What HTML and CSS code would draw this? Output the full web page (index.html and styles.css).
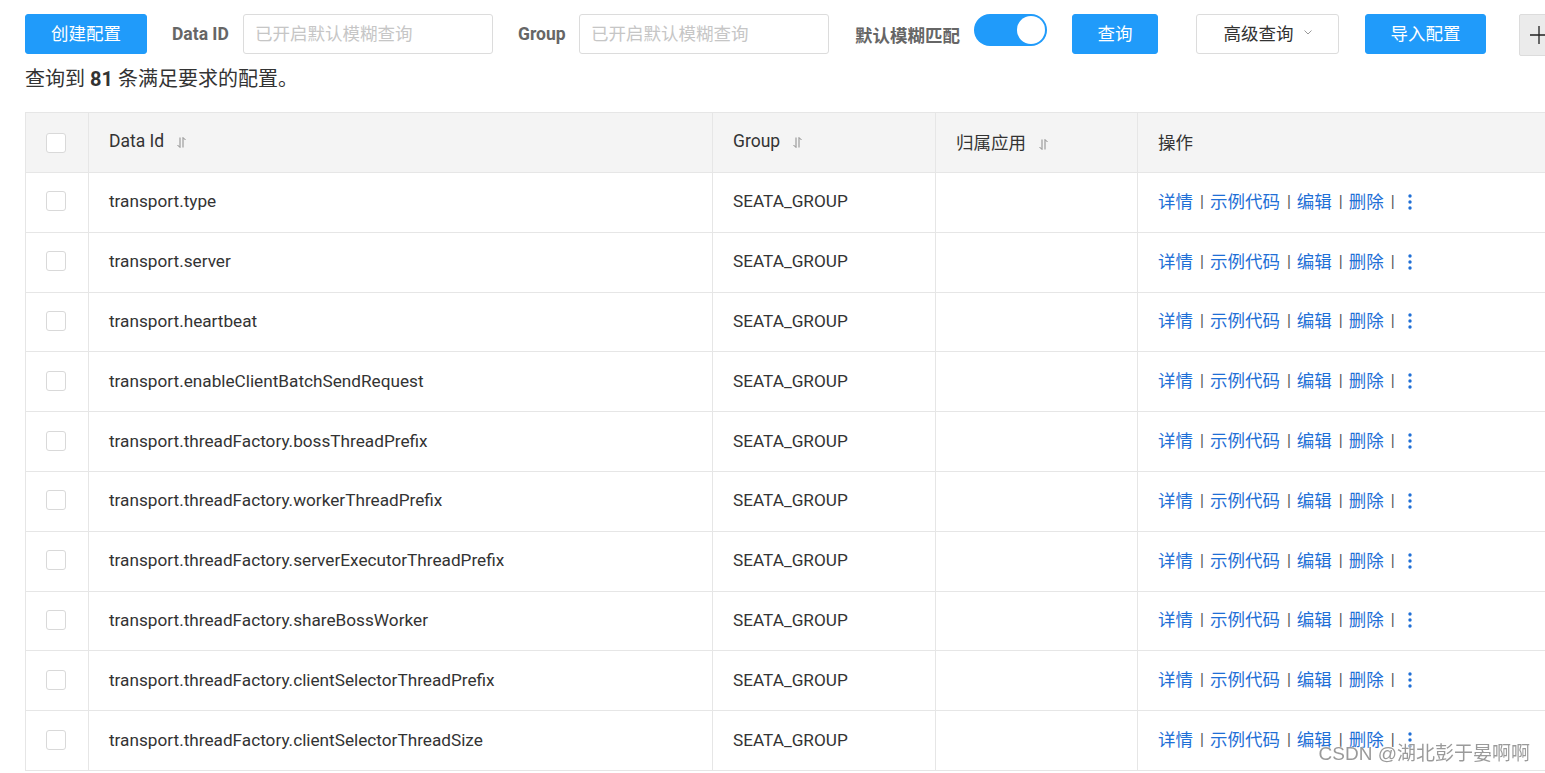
FILE: index.html
```html
<!DOCTYPE html>
<html lang="zh-CN">
<head>
<meta charset="utf-8">
<title>配置列表</title>
<link rel="stylesheet" href="styles.css">
</head>
<body>
<div class="page">
  <div class="toolbar">
    <button class="btn btn-primary btn-create">创建配置</button>
    <span class="label label-dataid">Data ID</span>
    <input class="input input-dataid" placeholder="已开启默认模糊查询">
    <span class="label label-group">Group</span>
    <input class="input input-group" placeholder="已开启默认模糊查询">
    <span class="label label-fuzzy">默认模糊匹配</span>
    <span class="switch"><span class="knob"></span></span>
    <button class="btn btn-primary btn-query">查询</button>
    <button class="btn btn-normal btn-adv">高级查询<svg class="chev" width="8" height="5" viewBox="0 0 8 5"><path d="M0.5 0.5L4 4L7.5 0.5" fill="none" stroke="#999" stroke-width="1"/></svg></button>
    <button class="btn btn-primary btn-import">导入配置</button>
    <button class="btn btn-plus"><svg width="20" height="20" viewBox="0 0 20 20"><path d="M10 1V19M1 10H19" stroke="#222" stroke-width="1.3"/></svg></button>
  </div>
  <div class="summary">查询到 <b>81</b> 条满足要求的配置。</div>
  <table class="table">
    <colgroup>
      <col class="c-check"><col class="c-id"><col class="c-group"><col class="c-app"><col class="c-op">
    </colgroup>
    <thead>
      <tr>
        <th class="cell-check"><span class="checkbox"></span></th>
        <th>Data Id<svg class="sort" width="9" height="11" viewBox="0 0 9 11"><path d="M3 0.5V10.5M3 10.5L0.5 8M6 10.5V0.5M6 0.5L8.5 3" fill="none" stroke="#8a8a8a" stroke-width="1"/></svg></th>
        <th>Group<svg class="sort" width="9" height="11" viewBox="0 0 9 11"><path d="M3 0.5V10.5M3 10.5L0.5 8M6 10.5V0.5M6 0.5L8.5 3" fill="none" stroke="#8a8a8a" stroke-width="1"/></svg></th>
        <th>归属应用<svg class="sort" width="9" height="11" viewBox="0 0 9 11"><path d="M3 0.5V10.5M3 10.5L0.5 8M6 10.5V0.5M6 0.5L8.5 3" fill="none" stroke="#8a8a8a" stroke-width="1"/></svg></th>
        <th>操作</th>
      </tr>
    </thead>
    <tbody>
      <tr><td class="cell-check"><span class="checkbox"></span></td><td>transport.type</td><td>SEATA_GROUP</td><td></td><td class="ops"><a>详情</a><span class="sep">|</span><a>示例代码</a><span class="sep">|</span><a>编辑</a><span class="sep">|</span><a>删除</a><span class="sep">|</span><svg class="more" width="4" height="16" viewBox="0 0 4 16"><circle cx="2" cy="2" r="1.7"/><circle cx="2" cy="8" r="1.7"/><circle cx="2" cy="14" r="1.7"/></svg></td></tr>
      <tr><td class="cell-check"><span class="checkbox"></span></td><td>transport.server</td><td>SEATA_GROUP</td><td></td><td class="ops"><a>详情</a><span class="sep">|</span><a>示例代码</a><span class="sep">|</span><a>编辑</a><span class="sep">|</span><a>删除</a><span class="sep">|</span><svg class="more" width="4" height="16" viewBox="0 0 4 16"><circle cx="2" cy="2" r="1.7"/><circle cx="2" cy="8" r="1.7"/><circle cx="2" cy="14" r="1.7"/></svg></td></tr>
      <tr><td class="cell-check"><span class="checkbox"></span></td><td>transport.heartbeat</td><td>SEATA_GROUP</td><td></td><td class="ops"><a>详情</a><span class="sep">|</span><a>示例代码</a><span class="sep">|</span><a>编辑</a><span class="sep">|</span><a>删除</a><span class="sep">|</span><svg class="more" width="4" height="16" viewBox="0 0 4 16"><circle cx="2" cy="2" r="1.7"/><circle cx="2" cy="8" r="1.7"/><circle cx="2" cy="14" r="1.7"/></svg></td></tr>
      <tr><td class="cell-check"><span class="checkbox"></span></td><td>transport.enableClientBatchSendRequest</td><td>SEATA_GROUP</td><td></td><td class="ops"><a>详情</a><span class="sep">|</span><a>示例代码</a><span class="sep">|</span><a>编辑</a><span class="sep">|</span><a>删除</a><span class="sep">|</span><svg class="more" width="4" height="16" viewBox="0 0 4 16"><circle cx="2" cy="2" r="1.7"/><circle cx="2" cy="8" r="1.7"/><circle cx="2" cy="14" r="1.7"/></svg></td></tr>
      <tr><td class="cell-check"><span class="checkbox"></span></td><td>transport.threadFactory.bossThreadPrefix</td><td>SEATA_GROUP</td><td></td><td class="ops"><a>详情</a><span class="sep">|</span><a>示例代码</a><span class="sep">|</span><a>编辑</a><span class="sep">|</span><a>删除</a><span class="sep">|</span><svg class="more" width="4" height="16" viewBox="0 0 4 16"><circle cx="2" cy="2" r="1.7"/><circle cx="2" cy="8" r="1.7"/><circle cx="2" cy="14" r="1.7"/></svg></td></tr>
      <tr><td class="cell-check"><span class="checkbox"></span></td><td>transport.threadFactory.workerThreadPrefix</td><td>SEATA_GROUP</td><td></td><td class="ops"><a>详情</a><span class="sep">|</span><a>示例代码</a><span class="sep">|</span><a>编辑</a><span class="sep">|</span><a>删除</a><span class="sep">|</span><svg class="more" width="4" height="16" viewBox="0 0 4 16"><circle cx="2" cy="2" r="1.7"/><circle cx="2" cy="8" r="1.7"/><circle cx="2" cy="14" r="1.7"/></svg></td></tr>
      <tr><td class="cell-check"><span class="checkbox"></span></td><td>transport.threadFactory.serverExecutorThreadPrefix</td><td>SEATA_GROUP</td><td></td><td class="ops"><a>详情</a><span class="sep">|</span><a>示例代码</a><span class="sep">|</span><a>编辑</a><span class="sep">|</span><a>删除</a><span class="sep">|</span><svg class="more" width="4" height="16" viewBox="0 0 4 16"><circle cx="2" cy="2" r="1.7"/><circle cx="2" cy="8" r="1.7"/><circle cx="2" cy="14" r="1.7"/></svg></td></tr>
      <tr><td class="cell-check"><span class="checkbox"></span></td><td>transport.threadFactory.shareBossWorker</td><td>SEATA_GROUP</td><td></td><td class="ops"><a>详情</a><span class="sep">|</span><a>示例代码</a><span class="sep">|</span><a>编辑</a><span class="sep">|</span><a>删除</a><span class="sep">|</span><svg class="more" width="4" height="16" viewBox="0 0 4 16"><circle cx="2" cy="2" r="1.7"/><circle cx="2" cy="8" r="1.7"/><circle cx="2" cy="14" r="1.7"/></svg></td></tr>
      <tr><td class="cell-check"><span class="checkbox"></span></td><td>transport.threadFactory.clientSelectorThreadPrefix</td><td>SEATA_GROUP</td><td></td><td class="ops"><a>详情</a><span class="sep">|</span><a>示例代码</a><span class="sep">|</span><a>编辑</a><span class="sep">|</span><a>删除</a><span class="sep">|</span><svg class="more" width="4" height="16" viewBox="0 0 4 16"><circle cx="2" cy="2" r="1.7"/><circle cx="2" cy="8" r="1.7"/><circle cx="2" cy="14" r="1.7"/></svg></td></tr>
      <tr><td class="cell-check"><span class="checkbox"></span></td><td>transport.threadFactory.clientSelectorThreadSize</td><td>SEATA_GROUP</td><td></td><td class="ops"><a>详情</a><span class="sep">|</span><a>示例代码</a><span class="sep">|</span><a>编辑</a><span class="sep">|</span><a>删除</a><span class="sep">|</span><svg class="more" width="4" height="16" viewBox="0 0 4 16"><circle cx="2" cy="2" r="1.7"/><circle cx="2" cy="8" r="1.7"/><circle cx="2" cy="14" r="1.7"/></svg></td></tr>
    </tbody>
  </table>
</div>
<div class="watermark">CSDN @湖北彭于晏啊啊</div>
</body>
</html>
```
FILE: styles.css
```css
html, body {
  margin: 0;
  padding: 0;
  background: #fff;
  overflow: hidden;
  height: 773px;
}
body {
  font-family: Roboto, "Noto Sans CJK SC", sans-serif;
  font-size: 17.5px;
  color: #333;
}
.page {
  padding: 14px 0 0 25px;
  width: 1700px;
}
.toolbar {
  display: flex;
  align-items: center;
  height: 40px;
}
.btn {
  flex-shrink: 0;
  height: 40px;
  border-radius: 3px;
  font-family: Roboto, "Noto Sans CJK SC", sans-serif;
  font-size: 17.5px;
  padding: 0 0 3px;
  cursor: pointer;
  display: flex;
  align-items: center;
  justify-content: center;
}
.btn-primary {
  background: #209bfa;
  border: 1px solid #209bfa;
  color: #fff;
}
.btn-normal {
  background: #fff;
  border: 1px solid #dcdcdc;
  color: #333;
}
.btn-create { width: 122px; margin-right: 25px; }
.btn-query { width: 86px; margin-right: 38px; }
.btn-adv { width: 143px; margin-right: 26px; }
.btn-import { width: 121px; margin-right: 33px; }
.btn-plus {
  width: 40px;
  height: 42px;
  padding: 0;
  align-self: flex-start;
  background: #ebebeb;
  border: 1px solid #dcdcdc;
  border-radius: 2px;
}
.chev { margin-left: 10px; }
.label {
  flex-shrink: 0;
  font-weight: bold;
  color: #666;
  white-space: nowrap;
  margin-right: 15px;
}
.label-dataid { width: 56px; }
.label-group { width: 46px; }
.label-fuzzy { width: 104px; }
.input {
  flex-shrink: 0;
  box-sizing: border-box;
  width: 250px;
  height: 40px;
  border: 1px solid #dcdcdc;
  border-radius: 3px;
  padding: 0 11px;
  font-family: Roboto, "Noto Sans CJK SC", sans-serif;
  font-size: 17.5px;
  outline: none;
}
.input::placeholder { color: #c6c6c6; }
.input-dataid { margin-right: 25px; }
.input-group { margin-right: 26px; }
.switch {
  flex-shrink: 0;
  align-self: flex-start;
  position: relative;
  width: 73px;
  height: 32px;
  border-radius: 16px;
  background: #209bfa;
  margin-right: 25px;
}
.knob {
  position: absolute;
  right: 2px;
  top: 2px;
  width: 28px;
  height: 28px;
  border-radius: 50%;
  background: #fff;
}
.summary {
  margin-top: 12px;
  font-size: 20px;
  line-height: 26px;
  height: 26px;
}
.summary b { font-weight: bold; }
.table {
  margin-top: 20px;
  border-collapse: collapse;
  table-layout: fixed;
  width: 1612px;
}
.c-check { width: 63px; }
.c-id { width: 624px; }
.c-group { width: 223px; }
.c-app { width: 202px; }
.c-op { width: 500px; }
.table th, .table td {
  border: 1px solid #e6e6e6;
  padding: 0 20px;
  text-align: left;
  font-weight: normal;
  white-space: nowrap;
  color: #333;
}
.table thead th {
  background: #f4f4f4;
  height: 56px;
  padding-bottom: 3px;
}
.table tbody td {
  height: 56.8px;
  padding-bottom: 2px;
  font-size: 17.2px;
}
.table .cell-check { padding: 0 0 0 20px; }
.table tbody .cell-check { padding-bottom: 2px; }
.table tbody td.ops {
  font-size: 17.5px;
  height: 54.8px;
  padding-bottom: 4px;
}
.checkbox {
  display: block;
  box-sizing: border-box;
  width: 20px;
  height: 20px;
  border: 1px solid #d9d9d9;
  border-radius: 3px;
  background: #fff;
}
.sort { margin-left: 13px; vertical-align: -1px; }
.ops a { color: #1f6fd6; }
.sep {
  color: #555;
  font-size: 16px;
  margin: 0 6px 0 7px;
  vertical-align: 1px;
}
.more {
  fill: #1f6fd6;
  margin-left: 7px;
  vertical-align: -2px;
}
.watermark {
  position: fixed;
  right: 15px;
  bottom: 8px;
  font-family: "Liberation Sans", "Noto Sans CJK SC", sans-serif;
  font-size: 19px;
  line-height: 22px;
  color: rgba(120, 120, 120, 0.75);
  text-shadow: 0 0 2px #fff, 0 0 1px #fff;
}
```
